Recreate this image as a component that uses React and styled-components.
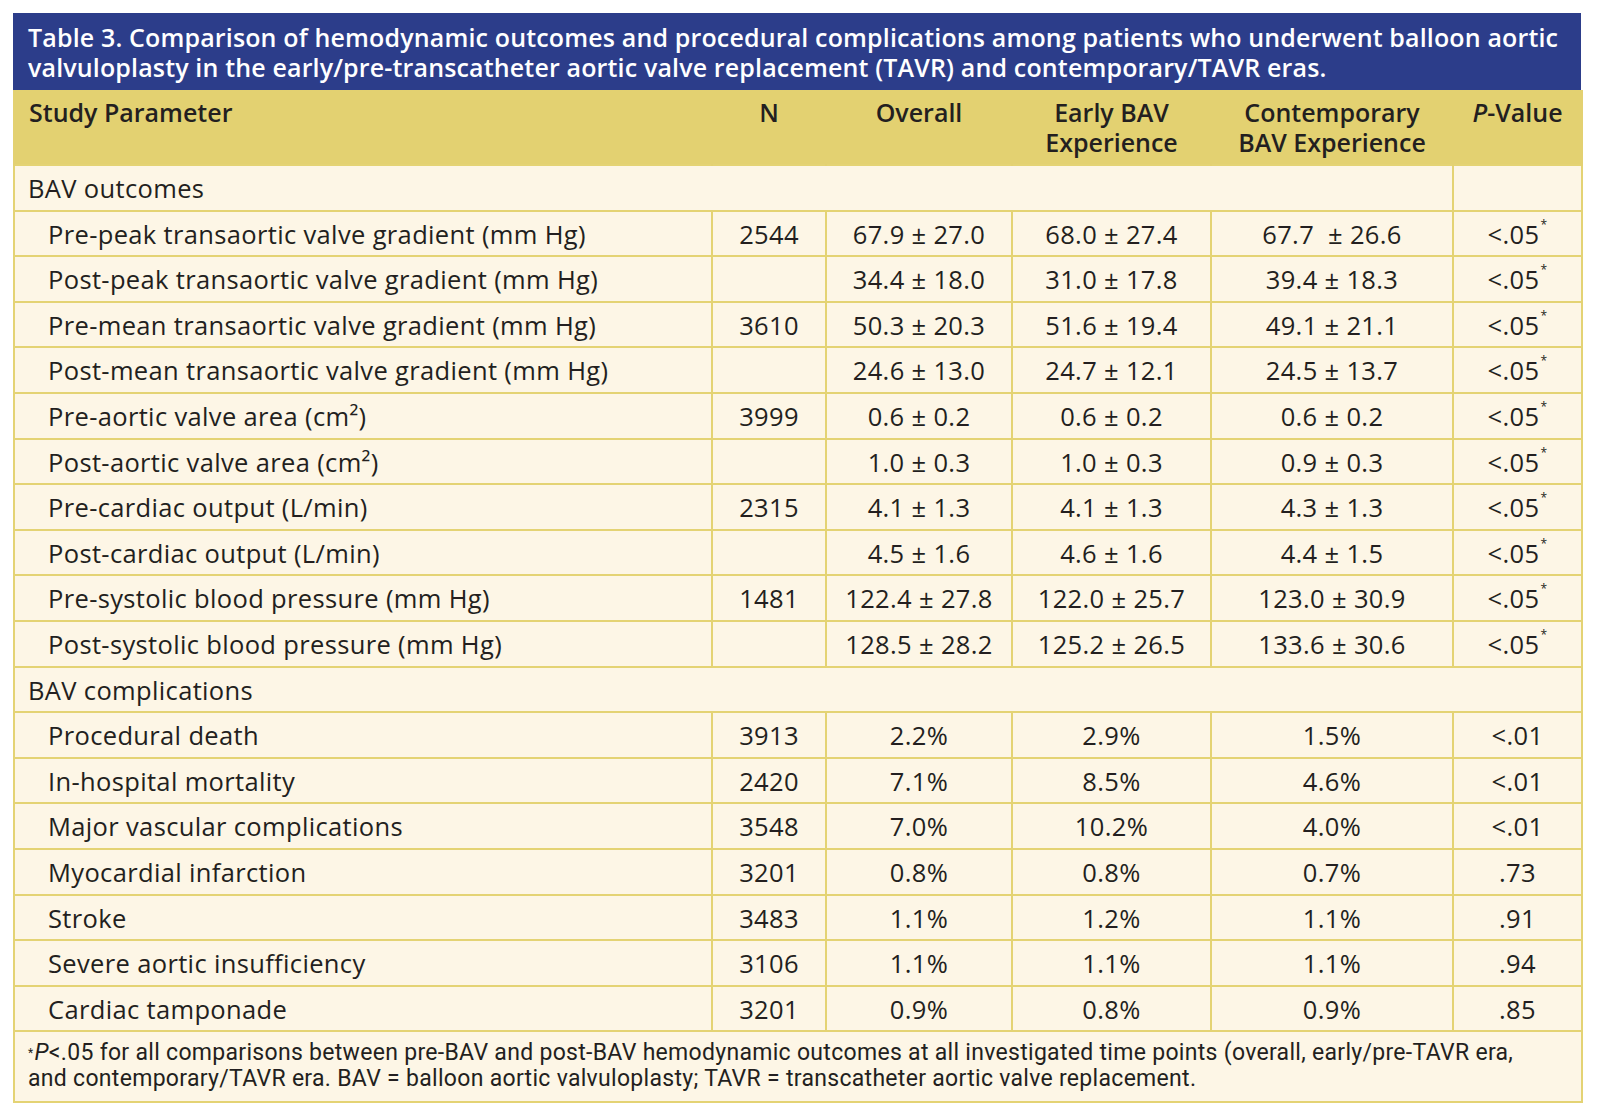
import styled, { createGlobalStyle } from "styled-components";

const Global = createGlobalStyle`
  body {
    margin: 0;
    background: #ffffff;
    font-family: "Open Sans", "Noto Sans", sans-serif;
    color: #231f20;
  }
`;

const Page = styled.div`
  padding: 13px 17px 0 13px;
`;

const Frame = styled.div`
  width: 1568px;
`;

const Title = styled.div`
  background: #2c3d8a;
  color: #ffffff;
  font-size: 25px;
  font-weight: 600;
  letter-spacing: 0.15px;
  line-height: 30px;
  padding: 9px 10px 8px 15px;
  height: 77px;
  box-sizing: border-box;
  white-space: nowrap;
`;

const Table = styled.table`
  width: 1568px;
  table-layout: fixed;
  border-collapse: collapse;
  background: #fdf6e6;
  font-size: 25.5px;
  letter-spacing: 0.35px;
`;

const HeadRow = styled.tr`
  background: #e3d171;
  height: 75px;
`;

const Th = styled.th`
  font-weight: 600;
  font-size: 25px;
  letter-spacing: 0;
  text-align: ${(p) => (p.$left ? "left" : "center")};
  vertical-align: top;
  line-height: 30px;
  padding: 7px ${(p) => (p.$left ? "0 0 14px" : "2px")};
  border-left: ${(p) => (p.$left ? "2px solid #e3d171" : "none")};
  border-right: 2px solid #e3d171;
  white-space: nowrap;
`;

const Row = styled.tr`
  height: 45.6px;
`;

const Cell = styled.td`
  border: 2px solid #e4d374;
  padding: 2px 0 0;
  text-align: center;
  line-height: 1;
  white-space: pre;
`;

const Section = styled(Cell)`
  text-align: left;
  padding-left: 13px;
`;

const Label = styled(Cell)`
  text-align: left;
  padding-left: 33px;
`;

const Star = styled.sup`
  font-size: 12px;
  vertical-align: top;
  position: relative;
  top: -3px;
  margin-left: 1px;
`;

const Note = styled.td`
  border: 2px solid #e4d374;
  font-family: Roboto, "Liberation Sans", sans-serif;
  font-size: 23px;
  letter-spacing: 0.3px;
  line-height: 26px;
  padding: 8px 10px 9px 13px;
  white-space: nowrap;
`;

const NoteStar = styled.sup`
  font-size: 12px;
  vertical-align: top;
  margin-right: 1px;
`;

const outcomes = [
  ["Pre-peak transaortic valve gradient (mm Hg)", "2544", "67.9 ± 27.0", "68.0 ± 27.4", "67.7  ± 26.6"],
  ["Post-peak transaortic valve gradient (mm Hg)", "", "34.4 ± 18.0", "31.0 ± 17.8", "39.4 ± 18.3"],
  ["Pre-mean transaortic valve gradient (mm Hg)", "3610", "50.3 ± 20.3", "51.6 ± 19.4", "49.1 ± 21.1"],
  ["Post-mean transaortic valve gradient (mm Hg)", "", "24.6 ± 13.0", "24.7 ± 12.1", "24.5 ± 13.7"],
  ["Pre-aortic valve area (cm²)", "3999", "0.6 ± 0.2", "0.6 ± 0.2", "0.6 ± 0.2"],
  ["Post-aortic valve area (cm²)", "", "1.0 ± 0.3", "1.0 ± 0.3", "0.9 ± 0.3"],
  ["Pre-cardiac output (L/min)", "2315", "4.1 ± 1.3", "4.1 ± 1.3", "4.3 ± 1.3"],
  ["Post-cardiac output (L/min)", "", "4.5 ± 1.6", "4.6 ± 1.6", "4.4 ± 1.5"],
  ["Pre-systolic blood pressure (mm Hg)", "1481", "122.4 ± 27.8", "122.0 ± 25.7", "123.0 ± 30.9"],
  ["Post-systolic blood pressure (mm Hg)", "", "128.5 ± 28.2", "125.2 ± 26.5", "133.6 ± 30.6"],
];

const complications = [
  ["Procedural death", "3913", "2.2%", "2.9%", "1.5%", "<.01"],
  ["In-hospital mortality", "2420", "7.1%", "8.5%", "4.6%", "<.01"],
  ["Major vascular complications", "3548", "7.0%", "10.2%", "4.0%", "<.01"],
  ["Myocardial infarction", "3201", "0.8%", "0.8%", "0.7%", ".73"],
  ["Stroke", "3483", "1.1%", "1.2%", "1.1%", ".91"],
  ["Severe aortic insufficiency", "3106", "1.1%", "1.1%", "1.1%", ".94"],
  ["Cardiac tamponade", "3201", "0.9%", "0.8%", "0.9%", ".85"],
];

export default function App() {
  return (
    <Page>
      <Global />
      <Frame>
        <Title>
          Table 3. Comparison of hemodynamic outcomes and procedural complications among patients who underwent balloon aortic
          <br />
          valvuloplasty in the early/pre-transcatheter aortic valve replacement (TAVR) and contemporary/TAVR eras.
        </Title>
        <Table>
          <colgroup>
            <col style={{ width: 698 }} />
            <col style={{ width: 114 }} />
            <col style={{ width: 186 }} />
            <col style={{ width: 199 }} />
            <col style={{ width: 242 }} />
            <col style={{ width: 129 }} />
          </colgroup>
          <thead>
            <HeadRow>
              <Th $left>Study Parameter</Th>
              <Th>N</Th>
              <Th>Overall</Th>
              <Th>Early BAV<br />Experience</Th>
              <Th>Contemporary<br />BAV Experience</Th>
              <Th><i>P</i>-Value</Th>
            </HeadRow>
          </thead>
          <tbody>
            <Row>
              <Section colSpan={5}>BAV outcomes</Section>
              <Cell />
            </Row>
            {outcomes.map((r) => (
              <Row key={r[0]}>
                <Label>{r[0]}</Label>
                <Cell>{r[1]}</Cell>
                <Cell>{r[2]}</Cell>
                <Cell>{r[3]}</Cell>
                <Cell>{r[4]}</Cell>
                <Cell>&lt;.05<Star>*</Star></Cell>
              </Row>
            ))}
            <Row>
              <Section colSpan={6}>BAV complications</Section>
            </Row>
            {complications.map((r) => (
              <Row key={r[0]}>
                <Label>{r[0]}</Label>
                {r.slice(1).map((v, i) => (
                  <Cell key={i}>{v}</Cell>
                ))}
              </Row>
            ))}
            <tr>
              <Note colSpan={6}>
                <NoteStar>*</NoteStar><i>P</i>&lt;.05 for all comparisons between pre-BAV and post-BAV hemodynamic outcomes at all investigated time points (overall, early/pre-TAVR era,
                <br />
                and contemporary/TAVR era. BAV = balloon aortic valvuloplasty; TAVR = transcatheter aortic valve replacement.
              </Note>
            </tr>
          </tbody>
        </Table>
      </Frame>
    </Page>
  );
}
